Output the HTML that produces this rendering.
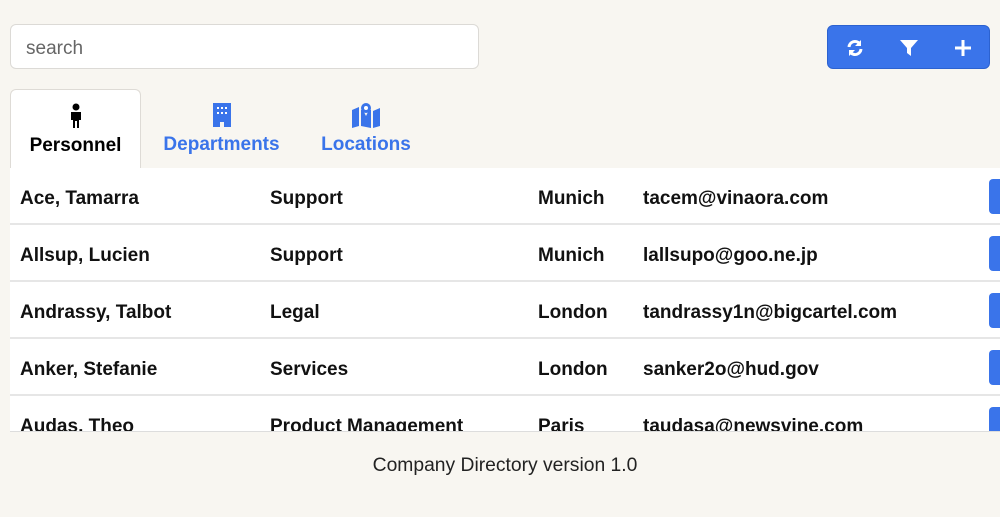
<!DOCTYPE html>
<html><head><style>
body{margin:0;width:1000px;height:517px;overflow:hidden;background:#f8f6f1;font-family:"Liberation Sans",sans-serif;position:relative}
.search{position:absolute;left:10px;top:24px;width:469px;height:45px;border:1px solid #dcdad6;border-radius:6px;background:#fff;box-sizing:border-box;padding-left:15px;line-height:47px;font-size:19px;color:#666}
.btns{position:absolute;left:827px;top:25px;width:163px;height:44px;background:#3a74ea;border:1px solid #2c62d0;border-radius:6px;box-sizing:border-box}
.btns svg{position:absolute;top:12px}
.tab{position:absolute;top:89px;height:80px;text-align:center;font-size:19px;font-weight:bold;color:#3a74ea}
.tab.act{background:#fff;border:1px solid #dedbd6;border-bottom:none;border-radius:6px 6px 0 0;color:#000;box-sizing:border-box}
.tab svg{display:block;margin:13px auto 6px}
.table{position:absolute;left:10px;top:168px;width:990px;height:263px;background:#fff;overflow:hidden;border-bottom:1px solid #ddd}
.row{position:relative;height:55px;border-bottom:2px solid #e6e6e6;font-size:19px;font-weight:bold;color:#111}
.row span{position:absolute;top:20px}
.row i{position:absolute;left:979px;top:11px;width:20px;height:35px;background:#3a74ea;border-radius:4px}
.foot{position:absolute;top:455px;width:1000px;text-align:center;font-size:19.3px;color:#222;left:5px}
</style></head><body>
<div class="search">search</div>
<div class="btns">
<svg style="left:17px" width="20" height="20" viewBox="0 0 20 20"><path d="M4 9a6 6 0 0 1 10.5-3.5M16 11a6 6 0 0 1-10.5 3.5" stroke="#fff" stroke-width="3" fill="none"/><path d="M16 2v6h-6zM4 18v-6h6z" fill="#fff"/></svg>
<svg style="left:71px" width="20" height="20" viewBox="0 0 20 20"><path d="M1 2h18l-7 8v8l-4-3v-5z" fill="#fff"/></svg>
<svg style="left:125px" width="20" height="20" viewBox="0 0 20 20"><path d="M10 2v16M2 10h16" stroke="#fff" stroke-width="3"/></svg>
</div>
<div class="tab act" style="left:10px;width:131px"><svg width="16" height="26" viewBox="0 0 16 26"><circle cx="8" cy="4" r="3.5" fill="#000"/><path d="M3 9h10v8h-2v8H9v-7H7v7H5v-8H3z" fill="#000"/></svg>Personnel</div>
<div class="tab" style="left:150px;width:143px"><svg width="20" height="26" viewBox="0 0 20 26"><path d="M1 1h18v24h-7v-5h-4v5H1z" fill="#3a74ea"/><g fill="#fff"><rect x="5" y="5" width="2" height="2"/><rect x="9" y="5" width="2" height="2"/><rect x="13" y="5" width="2" height="2"/><rect x="5" y="10" width="2" height="2"/><rect x="9" y="10" width="2" height="2"/><rect x="13" y="10" width="2" height="2"/></g></svg>Departments</div>
<div class="tab" style="left:310px;width:112px"><svg width="30" height="26" viewBox="0 0 30 26"><path d="M1 8l7-3v19l-7 2zM22 9l7-3v18l-7 2zM10 8h2l3 6 3-6h2v18l-10-2z" fill="#3a74ea"/><circle cx="15" cy="6" r="5" fill="#3a74ea"/><circle cx="15" cy="6" r="2" fill="#fff"/></svg>Locations</div>
<div class="table">
<div class="row"><span style="left:10px">Ace, Tamarra</span><span style="left:260px">Support</span><span style="left:528px">Munich</span><span style="left:633px">tacem@vinaora.com</span><i></i></div>
<div class="row"><span style="left:10px">Allsup, Lucien</span><span style="left:260px">Support</span><span style="left:528px">Munich</span><span style="left:633px">lallsupo@goo.ne.jp</span><i></i></div>
<div class="row"><span style="left:10px">Andrassy, Talbot</span><span style="left:260px">Legal</span><span style="left:528px">London</span><span style="left:633px">tandrassy1n@bigcartel.com</span><i></i></div>
<div class="row"><span style="left:10px">Anker, Stefanie</span><span style="left:260px">Services</span><span style="left:528px">London</span><span style="left:633px">sanker2o@hud.gov</span><i></i></div>
<div class="row"><span style="left:10px">Audas, Theo</span><span style="left:260px">Product Management</span><span style="left:528px">Paris</span><span style="left:633px">taudasa@newsvine.com</span><i></i></div>
</div>
<div class="foot">Company Directory version 1.0</div>
</body></html>
